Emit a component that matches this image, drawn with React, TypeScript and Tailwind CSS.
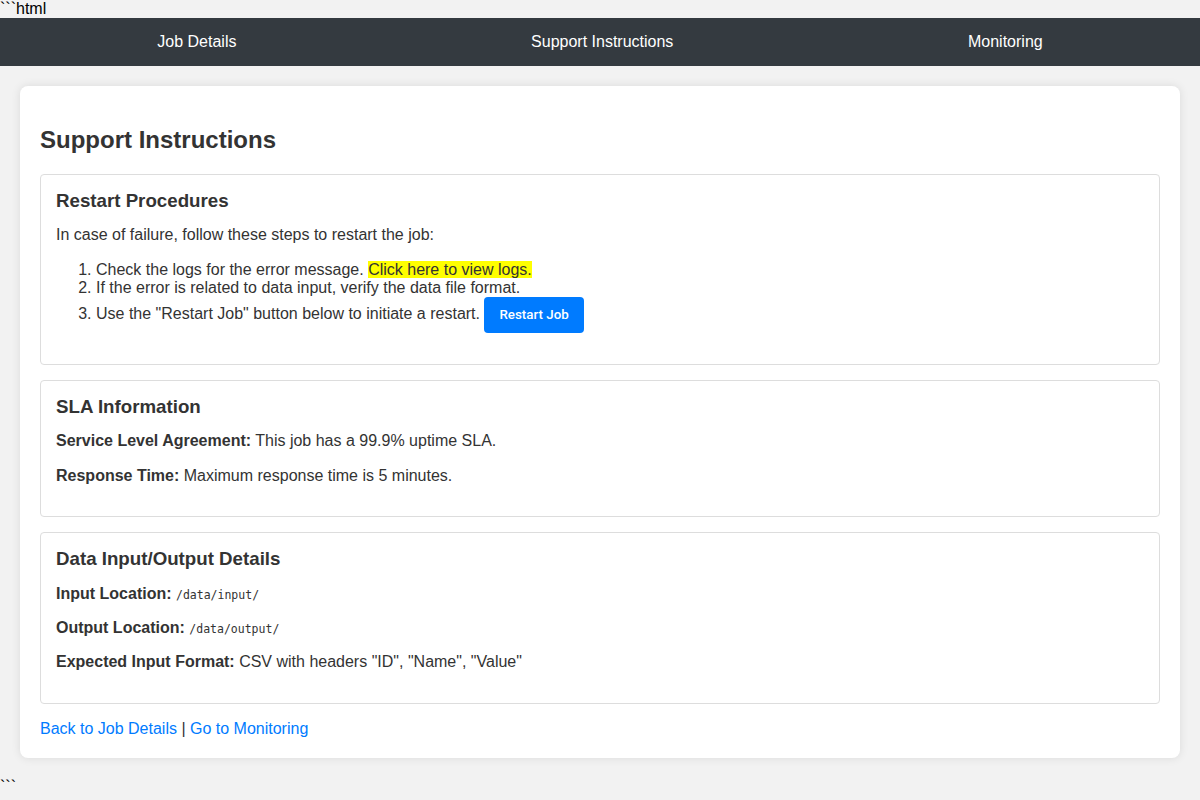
import React from "react";

function Section({ title, children, last }: { title: string; children: React.ReactNode; last?: boolean }) {
  return (
    <div className={`border border-[#ddd] rounded-[4px] p-[15px] ${last ? "" : "mb-[15px]"}`}>
      <h3 className="text-[18.72px] font-bold mb-[15px] leading-[1.15]">{title}</h3>
      {children}
    </div>
  );
}

const code = "font-['DejaVu_Sans_Mono',monospace] text-[11.5px]";

export default function App() {
  return (
    <div className="min-h-[800px] bg-[#f2f2f2] font-['Liberation_Sans',Arial,sans-serif] text-[16px] leading-[1.15] text-black">
      <div className="h-[18px]">```html</div>
      <nav className="bg-[#343a40] flex justify-around px-[10px] py-[15px] text-white">
        <a className="leading-[18px]">Job Details</a>
        <a className="leading-[18px]">Support Instructions</a>
        <a className="leading-[18px]">Monitoring</a>
      </nav>
      <div className="m-[20px] bg-white rounded-[8px] shadow-[0_0_10px_rgba(0,0,0,0.1)] p-[20px] text-[#333]">
        <h2 className="text-[24px] font-bold mt-[20px] mb-[20px]">Support Instructions</h2>

        <Section title="Restart Procedures">
          <p className="mb-[16px]">In case of failure, follow these steps to restart the job:</p>
          <ol className="list-decimal pl-[40px] mb-[16px]">
            <li>
              Check the logs for the error message. <mark className="bg-[#ffff00] text-[#333]">Click here to view logs.</mark>
            </li>
            <li>If the error is related to data input, verify the data file format.</li>
            <li>
              Use the "Restart Job" button below to initiate a restart.{" "}
              <button className="bg-[#007bff] text-white rounded-[4px] px-[15px] py-[10px] text-[13.33px] font-medium font-['Roboto',sans-serif] leading-[15.5px]">
                Restart Job
              </button>
            </li>
          </ol>
        </Section>

        <Section title="SLA Information">
          <p className="mb-[16px]">
            <strong>Service Level Agreement:</strong> This job has a 99.9% uptime SLA.
          </p>
          <p className="mb-[16px]">
            <strong>Response Time:</strong> Maximum response time is 5 minutes.
          </p>
        </Section>

        <Section title="Data Input/Output Details" last>
          <p className="mb-[16px]">
            <strong>Input Location:</strong> <code className={code}>/data/input/</code>
          </p>
          <p className="mb-[16px]">
            <strong>Output Location:</strong> <code className={code}>/data/output/</code>
          </p>
          <p className="mb-[16px]">
            <strong>Expected Input Format:</strong> CSV with headers "ID", "Name", "Value"
          </p>
        </Section>

        <p className="mt-[16px]">
          <a className="text-[#007bff]">Back to Job Details</a> | <a className="text-[#007bff]">Go to Monitoring</a>
        </p>
      </div>
      <div>```</div>
    </div>
  );
}
